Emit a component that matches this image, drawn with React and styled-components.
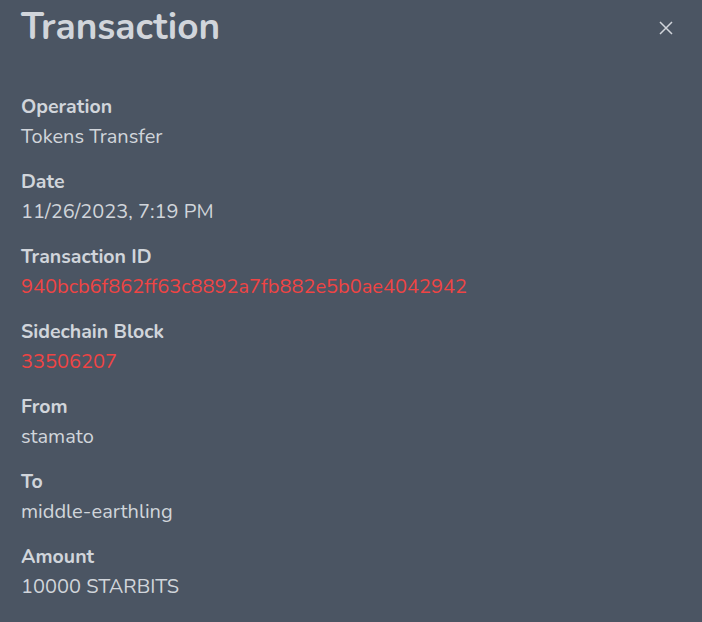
import React from "react";
import styled, { createGlobalStyle } from "styled-components";

const Global = createGlobalStyle`
  html, body { margin: 0; padding: 0; background: #4b5563; }
  body { font-family: "Nunito", Lato, "Noto Sans", sans-serif; }
`;

const Panel = styled.div`
  width: 702px;
  height: 622px;
  box-sizing: border-box;
  background: #4b5563;
  color: #d1d5db;
  padding: 0 21px;
  display: flex;
  flex-direction: column;
`;

const Header = styled.div`
  display: flex;
  align-items: center;
  justify-content: space-between;
  height: 54px;
`;

const Title = styled.h2`
  margin: 0;
  font-size: 37px;
  font-weight: 700;
  line-height: 54px;
  color: #d1d5db;
`;

const Close = styled.button`
  background: none;
  border: none;
  padding: 0;
  width: 16px;
  height: 16px;
  margin-right: 7px;
  margin-top: 2px;
  color: #d1d5db;
  display: flex;
  cursor: pointer;
`;

const List = styled.dl`
  margin: 38px 0 0;
  display: flex;
  flex-direction: column;
  gap: 15px;
`;

const Item = styled.div`
  display: flex;
  flex-direction: column;
`;

const Label = styled.dt`
  font-size: 19.5px;
  font-weight: 700;
  line-height: 30px;
`;

const Value = styled.dd`
  margin: 0;
  font-size: 20px;
  line-height: 30px;
  color: ${(p) => (p.$link ? "#ef4444" : "#d1d5db")};
`;

const rows = [
  ["Operation", "Tokens Transfer"],
  ["Date", "11/26/2023, 7:19 PM"],
  ["Transaction ID", "940bcb6f862ff63c8892a7fb882e5b0ae4042942", true],
  ["Sidechain Block", "33506207", true],
  ["From", "stamato"],
  ["To", "middle-earthling"],
  ["Amount", "10000 STARBITS"],
];

export default function App() {
  return (
    <Panel>
      <Global />
      <Header>
        <Title>Transaction</Title>
        <Close aria-label="Close">
          <svg width="16" height="16" viewBox="0 0 16 16" fill="none" stroke="currentColor" strokeWidth="1.5">
            <path d="M2 2 L14 14 M14 2 L2 14" />
          </svg>
        </Close>
      </Header>
      <List>
        {rows.map(([l, v, link]) => (
          <Item key={l}>
            <Label>{l}</Label>
            <Value $link={link}>{v}</Value>
          </Item>
        ))}
      </List>
    </Panel>
  );
}
